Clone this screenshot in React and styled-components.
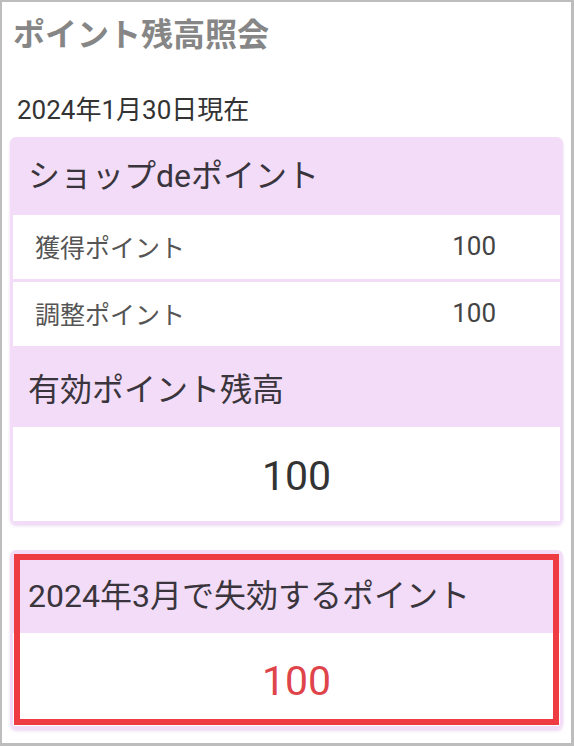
import React from "react";
import styled, { createGlobalStyle } from "styled-components";

const GlobalStyle = createGlobalStyle`
  html, body { margin: 0; padding: 0; background: #fff; }
  body { font-family: Roboto, "Noto Sans CJK JP", "Noto Sans", sans-serif; }
  * { box-sizing: border-box; }
`;

const LAV = "#f2dcf7";

const Frame = styled.div`
  width: 574px;
  height: 746px;
  border-style: solid;
  border-color: #bdbdbd;
  border-width: 2px 3px 3px 2px;
  padding: 0 8px;
  display: flex;
  flex-direction: column;
  background: #fff;
  overflow: hidden;
`;

const Title = styled.h1`
  margin: 11px 0 0 3px;
  font-size: 32px;
  line-height: 44px;
  font-weight: 700;
  color: #868686;
`;

const DateLine = styled.div`
  margin: 35px 0 0 7px;
  font-size: 26px;
  line-height: 36px;
  color: #333;
`;

const Card = styled.section`
  position: relative;
  margin-top: ${(p) => p.$mt}px;
  border: 3px solid ${LAV};
  border-radius: 6px;
  box-shadow: 0 2px 3px rgba(215, 170, 230, 0.45);
  display: flex;
  flex-direction: column;
`;

const SectionHeader = styled.div`
  height: ${(p) => p.$h}px;
  background: ${LAV};
  display: flex;
  align-items: center;
  padding: 0 0 ${(p) => p.$pb || 0}px 15px;
  font-size: 32px;
  color: #3a353d;
`;

const Row = styled.div`
  height: ${(p) => p.$h}px;
  border-top: 3px solid ${LAV};
  background: #fff;
  display: flex;
  align-items: center;
  justify-content: space-between;
  padding: 0 64px 3px 22px;
`;

const RowLabel = styled.span`
  font-size: 25px;
  color: #555;
`;

const RowValue = styled.span`
  font-size: 26px;
  color: #444;
`;

const ValueBox = styled.div`
  height: ${(p) => p.$h}px;
  background: #fff;
  display: flex;
  align-items: center;
  justify-content: center;
  padding: ${(p) => p.$pt || 0}px 0 0 20px;
  font-size: 41px;
  color: ${(p) => (p.$red ? "#e0444b" : "#333")};
`;

const Highlight = styled.div`
  position: absolute;
  inset: 1px;
  border: 6px solid #ef3b42;
  pointer-events: none;
`;

export default function App() {
  return (
    <>
      <GlobalStyle />
      <Frame>
        <Title>ポイント残高照会</Title>
        <DateLine>2024年1月30日現在</DateLine>
        <Card $mt={9}>
          <SectionHeader $h={72} $pb={6}>ショップdeポイント</SectionHeader>
          <Row $h={67}>
            <RowLabel>獲得ポイント</RowLabel>
            <RowValue>100</RowValue>
          </Row>
          <Row $h={67}>
            <RowLabel>調整ポイント</RowLabel>
            <RowValue>100</RowValue>
          </Row>
          <SectionHeader $h={81}>有効ポイント残高</SectionHeader>
          <ValueBox $h={94} $pt={4}>100</ValueBox>
        </Card>
        <Card $mt={26}>
          <SectionHeader $h={80}>2024年3月で失効するポイント</SectionHeader>
          <ValueBox $h={93} $pt={2} $red>100</ValueBox>
          <Highlight />
        </Card>
      </Frame>
    </>
  );
}
